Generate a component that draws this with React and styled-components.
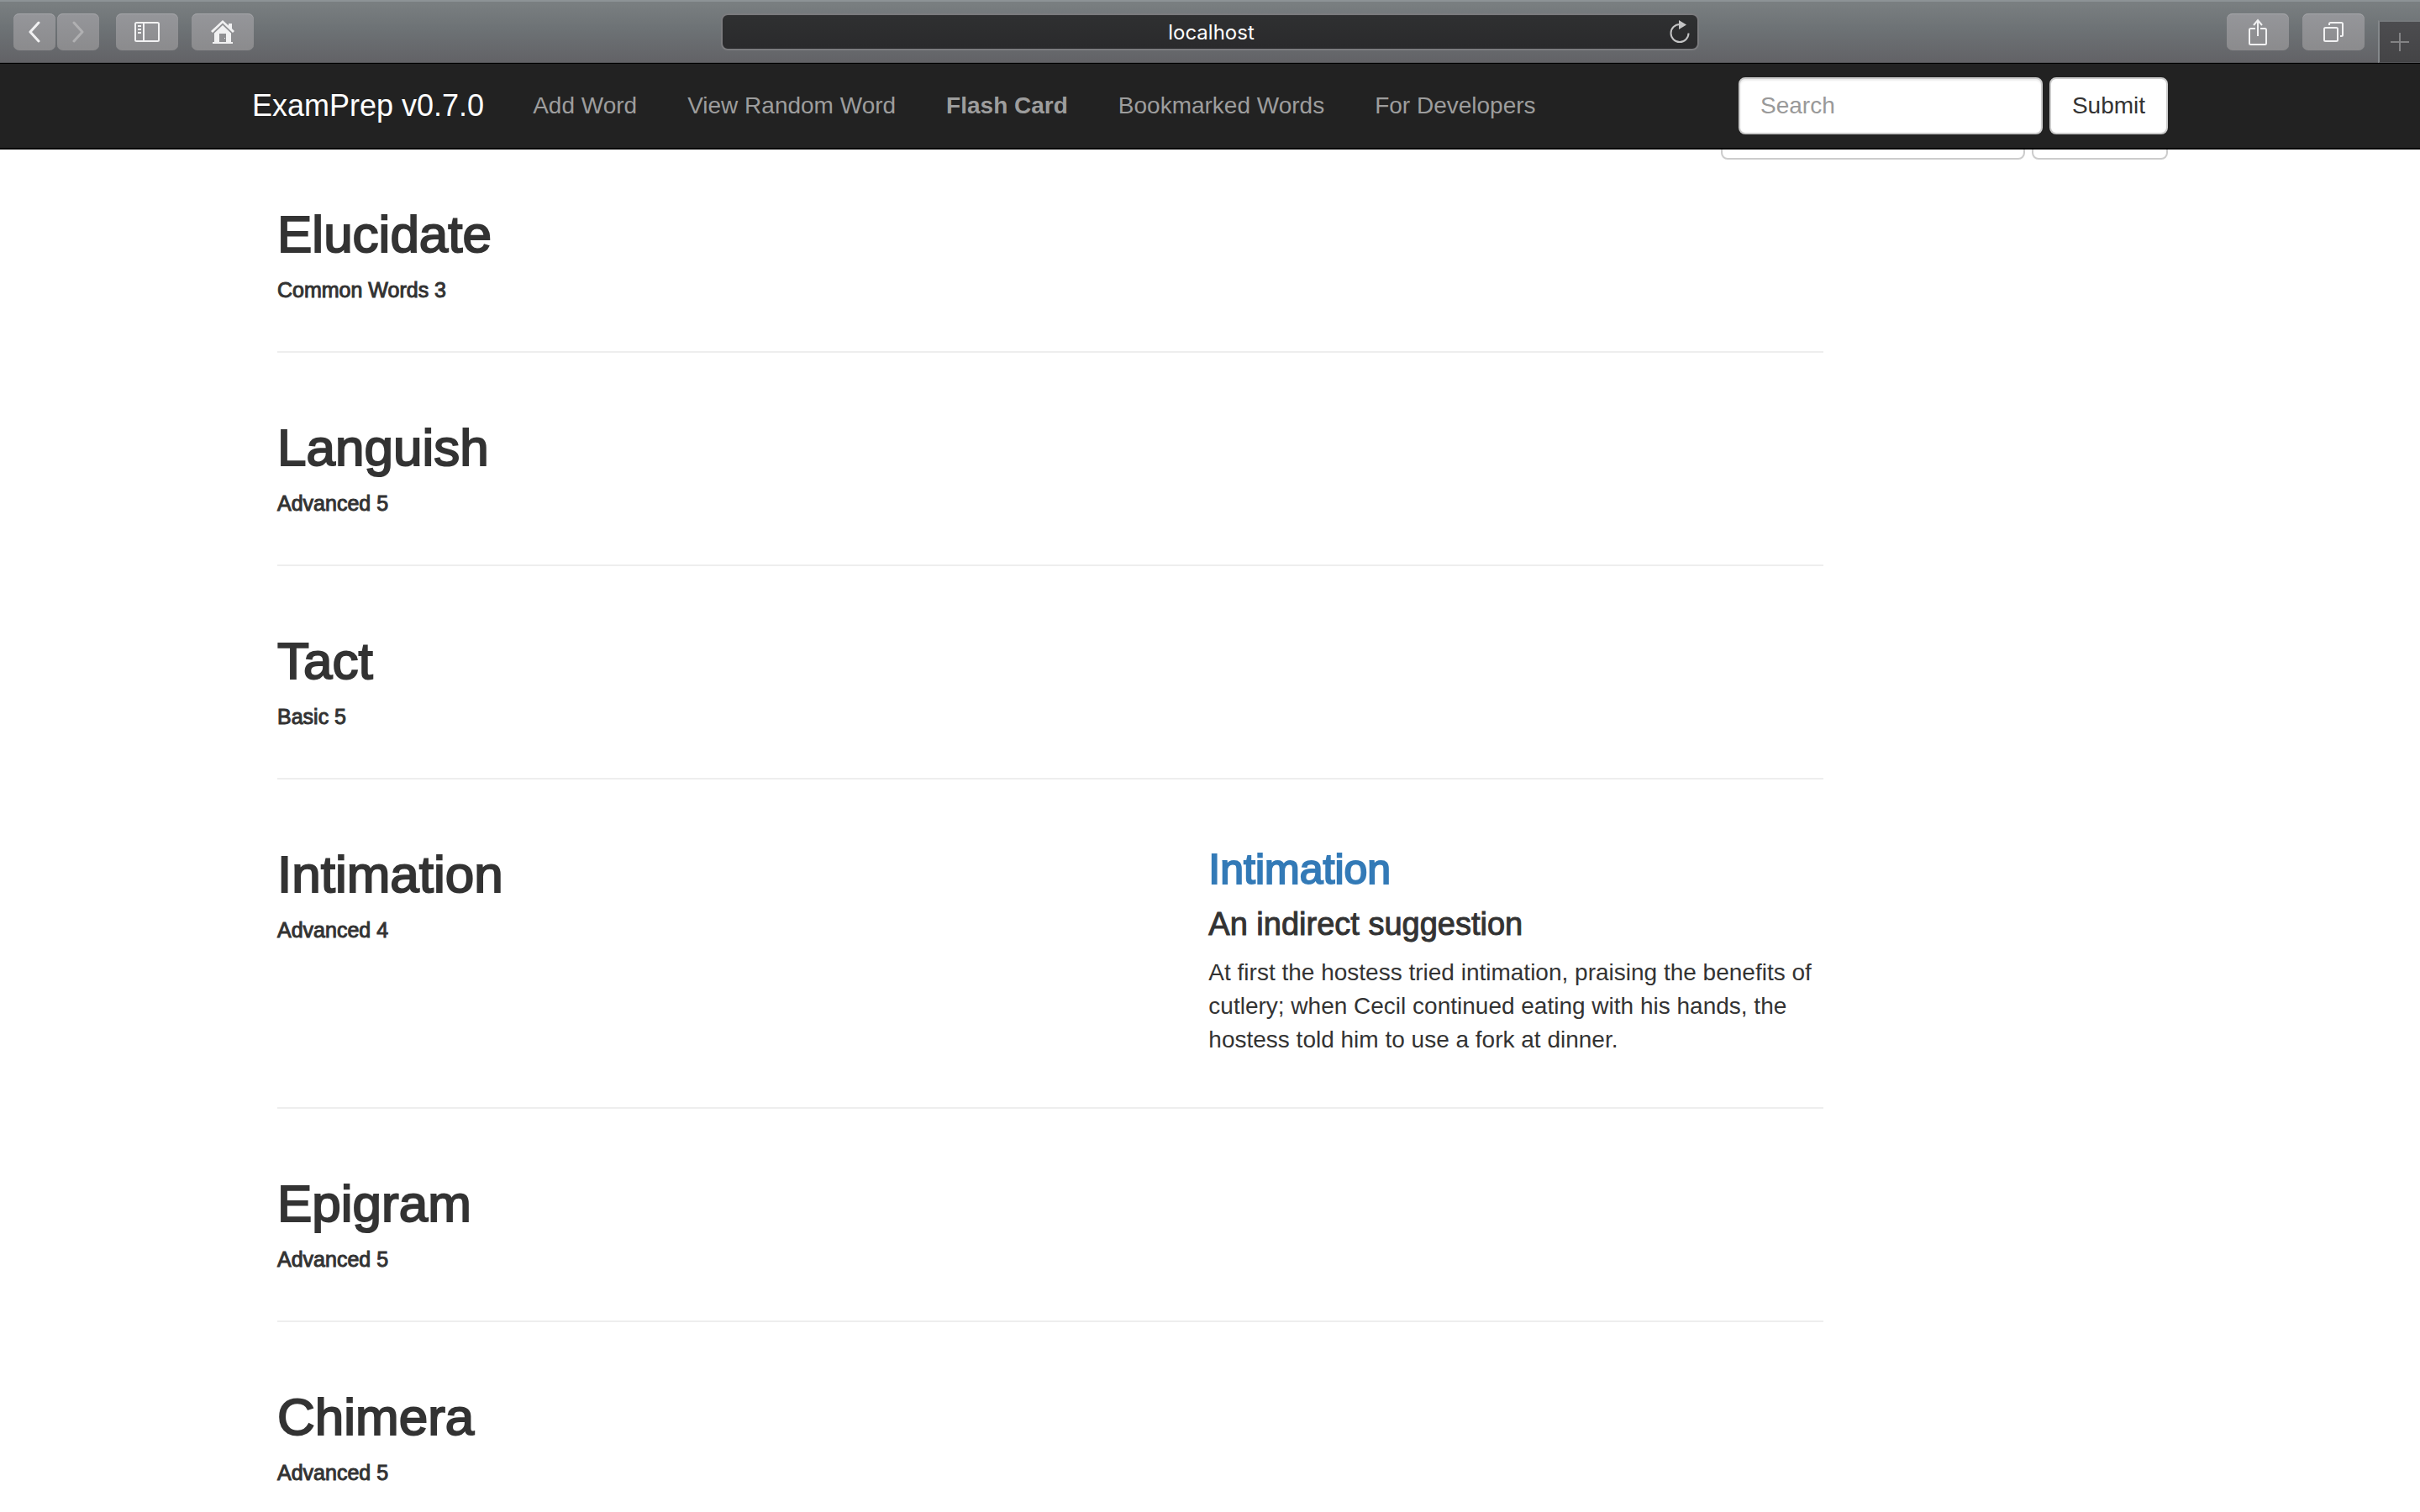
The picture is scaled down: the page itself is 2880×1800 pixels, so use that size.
import React from "react";
import styled, { createGlobalStyle, css } from "styled-components";

const sans = '"Liberation Sans", Arial, sans-serif';

const GlobalStyle = createGlobalStyle`
  *, *::before, *::after { box-sizing: border-box; }
  html, body { margin: 0; background: #fff; }
  body { overflow: hidden; }
  body, button, input { font-family: ${sans}; }
  #root { height: 100vh; }
`;

const Window = styled.div`
  display: flex;
  flex-direction: column;
  height: 100%;
  color: #333;
  font-size: 28px;
  line-height: 40px;
`;

const Toolbar = styled.header`
  flex: none;
  display: grid;
  grid-template-columns: minmax(0, 1fr) minmax(0, 1164px) minmax(0, 1fr);
  height: 76px;
  border-top: 2px solid #8d9396;
  border-bottom: 1px solid #000;
  background: linear-gradient(#7a7f81, #6d7275 45%, #626266);
  box-shadow: inset 0 -1px 0 #505154;
`;

const ToolGroup = styled.div`
  display: flex;
  align-items: flex-start;
  gap: 16px;
  padding: 14px 0 0 16px;
  ${(p) =>
    p.$end &&
    css`
      justify-content: flex-end;
      padding-left: 0;
    `}
`;

const HistoryButtons = styled.div`
  display: flex;
  gap: 2px;
  margin-right: 4px;
`;

const ToolButton = styled.button`
  display: grid;
  place-items: center;
  width: ${(p) => (p.$narrow ? 50 : 74)}px;
  height: 44px;
  padding: 0;
  border: 0;
  border-radius: 7px;
  background: linear-gradient(#95969a, #8b8b8d);
  box-shadow: inset 0 1px 0 #a5a6a9;
  color: ${(p) => (p.disabled ? "#b0b0b2" : "#f1f1f2")};
  svg { display: block; }
`;

const NewTab = styled.button`
  align-self: flex-end;
  display: grid;
  place-items: center;
  width: 50px;
  height: 51px;
  padding: 0;
  border: 0;
  border-top: 2px solid #75797c;
  border-left: 2px solid #85898c;
  border-bottom: 1px solid #505154;
  background: linear-gradient(#4c4c4f, #444446);
  color: #838385;
`;

const AddressBar = styled.div`
  display: flex;
  align-items: center;
  height: 44px;
  margin-top: 14px;
  padding: 0 9px 0 36px;
  border: 2px solid #7b7b7e;
  border-radius: 8px;
  background: linear-gradient(#2f3031, #2a2a2c);
`;

const Address = styled.input`
  flex: 1;
  min-width: 0;
  padding: 2px 0 0;
  border: 0;
  background: none;
  color: #fff;
  font: 24px/32px Inter, sans-serif;
  text-align: center;
  outline: 0;
`;

const Reload = styled.button`
  padding: 0;
  border: 0;
  background: none;
  color: #c4c4c5;
  svg { display: block; }
`;

const Viewport = styled.div`
  position: relative;
  flex: 1;
  min-height: 0;
  overflow: hidden;
`;

const Navbar = styled.nav`
  position: absolute;
  inset: 0 0 auto;
  z-index: 1;
  border-bottom: 2px solid #080808;
  background: #222;
`;

const Container = styled.div`
  max-width: 2340px;
  margin: 0 auto;
  padding: 0 30px;
`;

const NavContent = styled(Container)`
  display: flex;
  align-items: center;
  height: 100px;
`;

const Brand = styled.a`
  margin-right: 28px;
  color: #fff;
  font-size: 36px;
  text-decoration: none;
`;

const NavLink = styled.a`
  padding: 0 30px;
  color: #9d9d9d;
  font-weight: ${(p) => (p.$active ? 700 : 400)};
  text-decoration: none;
`;

const SearchForm = styled.form`
  display: flex;
  justify-content: flex-end;
  gap: 8px;
  margin-left: auto;
`;

const control = css`
  height: 68px;
  border: 2px solid #ccc;
  border-radius: 8px;
  background: #fff;
  font-size: 28px;
  line-height: 40px;
`;

const Field = styled.input`
  ${control}
  width: 362px;
  padding: 0 24px;
  box-shadow: inset 0 2px 2px rgba(0, 0, 0, 0.075);
  color: #555;
  &::placeholder { color: #999; opacity: 1; }
`;

const FormButton = styled.button`
  ${control}
  min-width: ${(p) => (p.$wide ? 162 : 141)}px;
  padding: 0 20px;
  color: #333;
`;

const Page = styled(Container)`
  padding-top: 46px;
`;

const WordList = styled.main`
  width: calc(100% * 10 / 12);
  padding-top: 16px;
`;

const Entry = styled.article`
  display: grid;
  grid-template-columns: 7fr 5fr;
  padding-top: 40px;
`;

const Column = styled.div`
  padding: 0 30px 20px;
`;

const Divider = styled.hr`
  margin: 40px 30px;
  border: 0;
  border-top: 2px solid #eee;
`;

const heading = css`
  margin: 0 0 18px;
  color: #333;
  font-weight: 500;
  -webkit-text-stroke: 1px currentColor;
`;

const Word = styled.h2`
  ${heading}
  margin-bottom: 20px;
  font-size: 62px;
  line-height: 66px;
  -webkit-text-stroke-width: 2px;
`;

const Level = styled.h6`
  ${heading}
  margin-bottom: 0;
  font-size: 25px;
  line-height: 26px;
`;

const Term = styled.h3`
  ${heading}
  font-size: 50px;
  line-height: 54px;
  -webkit-text-stroke-width: 2px;
  a { color: #337ab7; text-decoration: none; }
`;

const Meaning = styled.h4`
  ${heading}
  font-size: 38px;
  line-height: 40px;
`;

const Example = styled.p`
  margin: 0;
`;

const BackIcon = () => (
  <svg width="16" height="26" viewBox="0 0 16 26" fill="none" stroke="currentColor" strokeWidth="3" strokeLinecap="round" strokeLinejoin="round">
    <path d="M13 2 3 13l10 11" />
  </svg>
);

const ForwardIcon = () => (
  <svg width="16" height="26" viewBox="0 0 16 26" fill="none" stroke="currentColor" strokeWidth="3" strokeLinecap="round" strokeLinejoin="round">
    <path d="m3 2 10 11L3 24" />
  </svg>
);

const SidebarIcon = () => (
  <svg width="30" height="24" viewBox="0 0 30 24" fill="none" stroke="currentColor" strokeWidth="2">
    <rect x="1" y="1" width="28" height="22" rx="1.5" />
    <path d="M11 1v22M4 5h4M4 9h4M4 13h4" />
  </svg>
);

const HomeIcon = () => (
  <svg width="28" height="28" viewBox="0 0 28 28" fill="currentColor">
    <path d="M14 0 0 13l2 2L14 3.600 26 15l2-2-3-3V4h-4v2.500z" />
    <path fillRule="evenodd" d="M14 6 4 15.500V26H2v2h24v-2h-2V15.500zM10 16h8v10h-8z" />
    <path d="M16 21h1v1h-1z" />
  </svg>
);

const ShareIcon = () => (
  <svg width="24" height="32" viewBox="0 0 24 32" fill="none" stroke="currentColor" strokeWidth="2">
    <path d="M9 12H3.500Q2 12 2 13.500v16Q2 31 3.500 31h17q1.500 0 1.500-1.500v-16Q22 12 20.500 12H15M12 21V2M7 8l5-6 5 6" />
  </svg>
);

const TabsIcon = () => (
  <svg width="24" height="26" viewBox="0 0 24 26" fill="none" stroke="currentColor" strokeWidth="2">
    <rect x="1" y="8" width="16" height="16" rx="1.500" />
    <path d="M7 5V3.500Q7 2 8.500 2h13Q23 2 23 3.500v13Q23 18 21.500 18H20" />
  </svg>
);

const PlusIcon = () => (
  <svg width="22" height="22" viewBox="0 0 22 22" fill="none" stroke="currentColor" strokeWidth="2">
    <path d="M11 0v22M0 11h22" />
  </svg>
);

const ReloadIcon = () => (
  <svg width="24" height="28" viewBox="0 0 24 28" fill="none" stroke="currentColor" strokeWidth="2">
    <path d="M12 5A10.500 10.500 0 1 0 22.500 15.500" />
    <path d="M11 0v11l9-5.500z" fill="currentColor" stroke="none" />
  </svg>
);

const links = ["Add Word", "View Random Word", "Flash Card", "Bookmarked Words", "For Developers"];

const words = [
  { word: "Elucidate", level: "Common Words 3" },
  { word: "Languish", level: "Advanced 5" },
  { word: "Tact", level: "Basic 5" },
  {
    word: "Intimation",
    level: "Advanced 4",
    meaning: "An indirect suggestion",
    example:
      "At first the hostess tried intimation, praising the benefits of cutlery; when Cecil continued eating with his hands, the hostess told him to use a fork at dinner.",
  },
  { word: "Epigram", level: "Advanced 5" },
  { word: "Chimera", level: "Advanced 5" },
];

export default function App() {
  const stay = (e) => e.preventDefault();
  return (
    <Window>
      <GlobalStyle />
      <Toolbar>
        <ToolGroup>
          <HistoryButtons>
            <ToolButton $narrow aria-label="Back"><BackIcon /></ToolButton>
            <ToolButton $narrow disabled aria-label="Forward"><ForwardIcon /></ToolButton>
          </HistoryButtons>
          <ToolButton aria-label="Sidebar"><SidebarIcon /></ToolButton>
          <ToolButton aria-label="Home"><HomeIcon /></ToolButton>
        </ToolGroup>
        <AddressBar>
          <Address aria-label="Address" defaultValue="localhost" />
          <Reload aria-label="Reload"><ReloadIcon /></Reload>
        </AddressBar>
        <ToolGroup $end>
          <ToolButton aria-label="Share"><ShareIcon /></ToolButton>
          <ToolButton aria-label="Show tabs"><TabsIcon /></ToolButton>
          <NewTab aria-label="New tab"><PlusIcon /></NewTab>
        </ToolGroup>
      </Toolbar>
      <Viewport>
        <Navbar>
          <NavContent>
            <Brand href="#home">ExamPrep v0.7.0</Brand>
            {links.map((label) => (
              <NavLink key={label} href="#nav" $active={label === "Flash Card"}>{label}</NavLink>
            ))}
            <SearchForm onSubmit={stay}>
              <Field aria-label="Search" placeholder="Search" />
              <FormButton>Submit</FormButton>
            </SearchForm>
          </NavContent>
        </Navbar>
        <Page>
          <SearchForm onSubmit={stay}>
            <Field aria-label="Find a word" />
            <FormButton $wide aria-label="Find" />
          </SearchForm>
          <WordList>
            {words.map((item) => (
              <React.Fragment key={item.word}>
                <Entry>
                  <Column>
                    <Word>{item.word}</Word>
                    <Level>{item.level}</Level>
                  </Column>
                  {item.meaning && (
                    <Column>
                      <Term><a href="#word">{item.word}</a></Term>
                      <Meaning>{item.meaning}</Meaning>
                      <Example>{item.example}</Example>
                    </Column>
                  )}
                </Entry>
                <Divider />
              </React.Fragment>
            ))}
          </WordList>
        </Page>
      </Viewport>
    </Window>
  );
}
